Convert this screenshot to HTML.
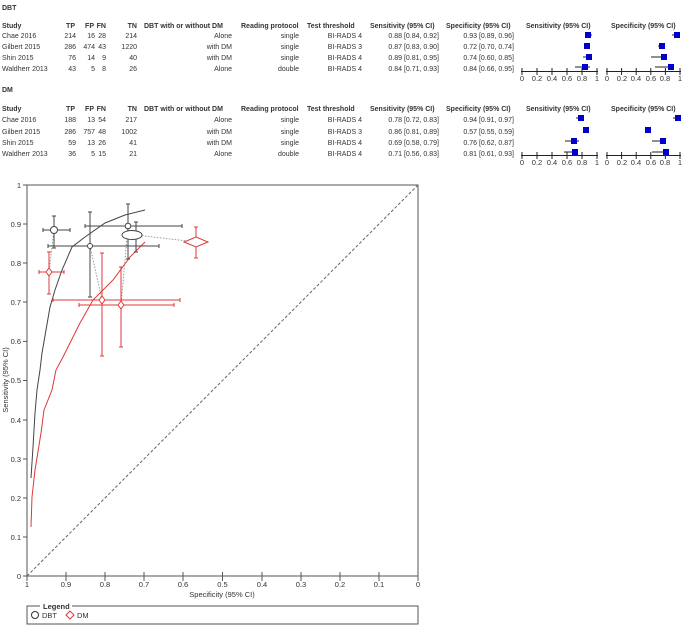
<!DOCTYPE html>
<html><head><meta charset="utf-8"><style>
html,body{margin:0;padding:0;background:#fff;}
svg{display:block;font-family:"Liberation Sans",Arial,sans-serif;}
</style></head><body>
<svg width="685" height="626" viewBox="0 0 685 626" xmlns="http://www.w3.org/2000/svg">
<g font-size="7" fill="#333">
<text x="2" y="10" font-weight="bold" font-size="7">DBT</text>
<text x="2" y="92" font-weight="bold" font-size="7">DM</text>
<g font-weight="bold">
<text x="2" y="28">Study</text><text x="2" y="111">Study</text>
<g text-anchor="end">
<text x="75" y="28">TP</text><text x="94" y="28">FP</text><text x="106" y="28">FN</text><text x="137" y="28">TN</text>
<text x="75" y="111">TP</text><text x="94" y="111">FP</text><text x="106" y="111">FN</text><text x="137" y="111">TN</text>
</g>
<text x="144" y="28">DBT with or without DM</text><text x="241" y="28">Reading protocol</text><text x="307" y="28">Test threshold</text>
<text x="370" y="28">Sensitivity (95% CI)</text><text x="446" y="28">Specificity (95% CI)</text>
<text x="526" y="28">Sensitivity (95% CI)</text><text x="611" y="28">Specificity (95% CI)</text>
<text x="144" y="111">DBT with or without DM</text><text x="241" y="111">Reading protocol</text><text x="307" y="111">Test threshold</text>
<text x="370" y="111">Sensitivity (95% CI)</text><text x="446" y="111">Specificity (95% CI)</text>
<text x="526" y="111">Sensitivity (95% CI)</text><text x="611" y="111">Specificity (95% CI)</text>
</g>
<g>
<text x="2" y="38">Chae 2016</text><text x="2" y="49">Gilbert 2015</text><text x="2" y="60">Shin 2015</text><text x="2" y="71">Waldherr 2013</text>
<text x="2" y="122">Chae 2016</text><text x="2" y="134">Gilbert 2015</text><text x="2" y="145">Shin 2015</text><text x="2" y="156">Waldherr 2013</text>
</g>
<g text-anchor="end">
<text x="76" y="38">214</text><text x="95" y="38">16</text><text x="106" y="38">28</text><text x="137" y="38">214</text>
<text x="76" y="49">286</text><text x="95" y="49">474</text><text x="106" y="49">43</text><text x="137" y="49">1220</text>
<text x="76" y="60">76</text><text x="95" y="60">14</text><text x="106" y="60">9</text><text x="137" y="60">40</text>
<text x="76" y="71">43</text><text x="95" y="71">5</text><text x="106" y="71">8</text><text x="137" y="71">26</text>
<text x="76" y="122">188</text><text x="95" y="122">13</text><text x="106" y="122">54</text><text x="137" y="122">217</text>
<text x="76" y="134">286</text><text x="95" y="134">757</text><text x="106" y="134">48</text><text x="137" y="134">1002</text>
<text x="76" y="145">59</text><text x="95" y="145">13</text><text x="106" y="145">26</text><text x="137" y="145">41</text>
<text x="76" y="156">36</text><text x="95" y="156">5</text><text x="106" y="156">15</text><text x="137" y="156">21</text>
<text x="232" y="38">Alone</text><text x="232" y="49">with DM</text><text x="232" y="60">with DM</text><text x="232" y="71">Alone</text>
<text x="232" y="122">Alone</text><text x="232" y="134">with DM</text><text x="232" y="145">with DM</text><text x="232" y="156">Alone</text>
<text x="299" y="38">single</text><text x="299" y="49">single</text><text x="299" y="60">single</text><text x="299" y="71">double</text>
<text x="299" y="122">single</text><text x="299" y="134">single</text><text x="299" y="145">single</text><text x="299" y="156">double</text>
<text x="362" y="38">BI-RADS 4</text><text x="362" y="49">BI-RADS 3</text><text x="362" y="60">BI-RADS 4</text><text x="362" y="71">BI-RADS 4</text>
<text x="362" y="122">BI-RADS 4</text><text x="362" y="134">BI-RADS 3</text><text x="362" y="145">BI-RADS 4</text><text x="362" y="156">BI-RADS 4</text>
<text x="439" y="38">0.88 [0.84, 0.92]</text><text x="439" y="49">0.87 [0.83, 0.90]</text><text x="439" y="60">0.89 [0.81, 0.95]</text><text x="439" y="71">0.84 [0.71, 0.93]</text>
<text x="439" y="122">0.78 [0.72, 0.83]</text><text x="439" y="134">0.86 [0.81, 0.89]</text><text x="439" y="145">0.69 [0.58, 0.79]</text><text x="439" y="156">0.71 [0.56, 0.83]</text>
<text x="514" y="38">0.93 [0.89, 0.96]</text><text x="514" y="49">0.72 [0.70, 0.74]</text><text x="514" y="60">0.74 [0.60, 0.85]</text><text x="514" y="71">0.84 [0.66, 0.95]</text>
<text x="514" y="122">0.94 [0.91, 0.97]</text><text x="514" y="134">0.57 [0.55, 0.59]</text><text x="514" y="145">0.76 [0.62, 0.87]</text><text x="514" y="156">0.81 [0.61, 0.93]</text>
</g>
</g>
<!-- forest plots -->
<g stroke="#222" stroke-width="1">
<line x1="521" y1="71.5" x2="598" y2="71.5"/><line x1="606" y1="71.5" x2="681" y2="71.5"/>
<line x1="521" y1="155.5" x2="598" y2="155.5"/><line x1="606" y1="155.5" x2="681" y2="155.5"/>
<path d="M522 68v7M537 68v7M552 68v7M567 68v7M582 68v7M597 68v7M607 68v7M621.6 68v7M636.2 68v7M650.8 68v7M665.4 68v7M680 68v7"/>
<path d="M522 152v7M537 152v7M552 152v7M567 152v7M582 152v7M597 152v7M607 152v7M621.6 152v7M636.2 152v7M650.8 152v7M665.4 152v7M680 152v7"/>
<path d="M585 35h7M584 46h5M583 57h8M575 67h15"/>
<path d="M672 35h3M658 46h3M651 57h11M655 67h14"/>
<path d="M576 118h6M583 130h4M565 141h14M564 152h14"/>
<path d="M673 118h5M647 130h2M652 141h12M652 152h16"/>
</g>
<g fill="#0000c8">
<rect x="585" y="32" width="6" height="6"/><rect x="584" y="43" width="6" height="6"/><rect x="586" y="54" width="6" height="6"/><rect x="582" y="64" width="6" height="6"/>
<rect x="674" y="32" width="6" height="6"/><rect x="659" y="43" width="6" height="6"/><rect x="661" y="54" width="6" height="6"/><rect x="668" y="64" width="6" height="6"/>
<rect x="578" y="115" width="6" height="6"/><rect x="583" y="127" width="6" height="6"/><rect x="571" y="138" width="6" height="6"/><rect x="572" y="149" width="6" height="6"/>
<rect x="675" y="115" width="6" height="6"/><rect x="645" y="127" width="6" height="6"/><rect x="660" y="138" width="6" height="6"/><rect x="663" y="149" width="6" height="6"/>
</g>
<g font-size="7.5" fill="#333" text-anchor="middle">
<text x="522" y="81">0</text><text x="537" y="81">0.2</text><text x="552" y="81">0.4</text><text x="567" y="81">0.6</text><text x="582" y="81">0.8</text><text x="597" y="81">1</text>
<text x="607" y="81">0</text><text x="622" y="81">0.2</text><text x="636" y="81">0.4</text><text x="651" y="81">0.6</text><text x="665" y="81">0.8</text><text x="680" y="81">1</text>
<text x="522" y="165">0</text><text x="537" y="165">0.2</text><text x="552" y="165">0.4</text><text x="567" y="165">0.6</text><text x="582" y="165">0.8</text><text x="597" y="165">1</text>
<text x="607" y="165">0</text><text x="622" y="165">0.2</text><text x="636" y="165">0.4</text><text x="651" y="165">0.6</text><text x="665" y="165">0.8</text><text x="680" y="165">1</text>
</g>
<!-- SROC plot -->
<path d="M27 185V576H418V185Z" fill="none" stroke="#555" stroke-width="1"/>
<line x1="27" y1="576" x2="418" y2="185" stroke="#666" stroke-dasharray="3,2"/>
<g stroke="#555">
<path d="M23 576h4M23 537h4M23 498h4M23 459h4M23 420h4M23 380.5h4M23 341.4h4M23 302h4M23 263h4M23 224h4M23 185h4"/>
<path d="M27 576v5M66 572v9M105 572v9M144 572v9M183 572v9M222.5 572v9M262 572v9M301 572v9M340 572v9M379 572v9M418 576v5"/>
</g>
<g font-size="7.5" fill="#333" text-anchor="end">
<text x="21" y="579">0</text><text x="21" y="540">0.1</text><text x="21" y="501">0.2</text><text x="21" y="462">0.3</text><text x="21" y="423">0.4</text><text x="21" y="383">0.5</text><text x="21" y="344">0.6</text><text x="21" y="305">0.7</text><text x="21" y="266">0.8</text><text x="21" y="227">0.9</text><text x="21" y="188">1</text>
</g>
<g font-size="7.5" fill="#333" text-anchor="middle">
<text x="27" y="587">1</text><text x="66" y="587">0.9</text><text x="105" y="587">0.8</text><text x="144" y="587">0.7</text><text x="183" y="587">0.6</text><text x="222.5" y="587">0.5</text><text x="262" y="587">0.4</text><text x="301" y="587">0.3</text><text x="340" y="587">0.2</text><text x="379" y="587">0.1</text><text x="418" y="587">0</text>
<text x="222" y="597">Specificity (95% CI)</text>
<text transform="translate(8,380) rotate(-90)">Sensitivity (95% CI)</text>
</g>
<path d="M31 478 L33 447 L35 413 L37 390 L40 370 L42 353 L50 307 L55 290 L62 270 L72 247 L85 237 L105 223 L125 215 L145 210" fill="none" stroke="#444" stroke-width="1"/>
<path d="M31 527 L32 497 L35 470 L41 433 L44 410 L52 390 L56 370 L63 357 L80 323 L93 300 L113 280 L130 257 L145 242" fill="none" stroke="#e03838" stroke-width="1"/>
<g stroke="#999" stroke-dasharray="1.5,1.5" fill="none">
<path d="M54 230L49 272M136 235L196 242M128 226L121 305M90 246L102 300"/>
</g>
<g stroke="#444" fill="none">
<path d="M43 230h27M43 228v4M70 228v4M54 216v32M52 216h4M52 248h4"/>
<path d="M85 226h97M85 224v4M182 224v4M128 204v55M126 204h4M126 259h4"/>
<path d="M48 246h111M48 244v4M159 244v4M90 212v85M88 212h4M88 297h4"/>
<path d="M136 222v30M134 222h4M134 252h4"/>
</g>
<g stroke="#e03838" fill="none">
<path d="M39 272h25M39 270v4M64 270v4M49 252v42M47 252h4M47 294h4"/>
<path d="M53 300h127M53 298v4M180 298v4M102 253v103M100 253h4M100 356h4"/>
<path d="M79 305h95M79 303v4M174 303v4M121 267v80M119 267h4M119 347h4"/>
<path d="M196 227v31M194 227h4M194 258h4"/>
</g>
<g fill="#fff" stroke="#444">
<circle cx="54" cy="230" r="3.5"/><circle cx="128" cy="226" r="2.8"/><circle cx="90" cy="246" r="2.5"/>
<ellipse cx="132" cy="235" rx="10" ry="4.5"/>
</g>
<g fill="#fff" stroke="#e03838">
<path d="M49 268l3 4-3 4-3-4z"/><path d="M102 296l3 4-3 4-3-4z"/><path d="M121 301l3 4-3 4-3-4z"/>
<path d="M184 242l12-5 12 5-12 5z"/>
</g>
<path d="M40 606H27V624H418V606H72" fill="none" stroke="#555"/>
<text x="43" y="609" font-size="7.5" font-weight="bold" fill="#333">Legend</text>
<circle cx="35" cy="615" r="3.5" fill="none" stroke="#333"/>
<text x="42" y="618" font-size="7.5" fill="#333">DBT</text>
<path d="M70 611l4 4-4 4-4-4z" fill="none" stroke="#e03838"/>
<text x="77" y="618" font-size="7.5" fill="#333">DM</text>
</svg>
</body></html>
